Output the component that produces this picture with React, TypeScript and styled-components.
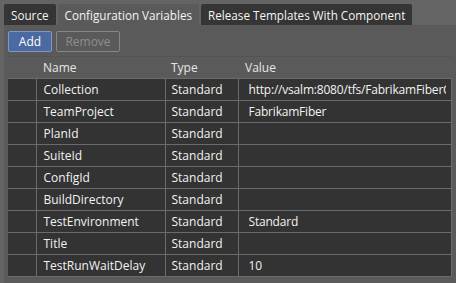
import React from 'react'
import styled, { createGlobalStyle } from 'styled-components'

const GlobalStyle = createGlobalStyle`
  html, body {
    margin: 0;
    padding: 0;
    background: #646464;
  }
  body {
    font-family: "Open Sans", "Noto Sans", sans-serif;
    font-size: 12px;
    color: #f2f2f2;
  }
`

const Window = styled.div`
  width: 456px;
  height: 283px;
  display: flex;
  flex-direction: column;
  padding-top: 4px;
  padding-left: 4px;
  box-sizing: border-box;
  overflow: hidden;
`

const TabStrip = styled.div`
  display: flex;
  gap: 2px;
  height: 21px;
`

const Tab = styled.div<{ $active?: boolean }>`
  display: flex;
  align-items: center;
  padding: 0 7px;
  height: 21px;
  box-sizing: border-box;
  border-radius: 2px 2px 0 0;
  background: ${p => (p.$active ? '#5a5a5a' : '#353535')};
  color: #f4f4f4;
  font-size: 11.7px;
  white-space: nowrap;
`

const Panel = styled.div`
  flex: 1;
  background: #5a5a5a;
  padding: 6px 4px 0 4px;
  display: flex;
  flex-direction: column;
`

const Toolbar = styled.div`
  display: flex;
  gap: 4px;
  height: 21px;
`

const Button = styled.button<{ $primary?: boolean; $width: number }>`
  font: inherit;
  width: ${p => p.$width}px;
  height: 21px;
  box-sizing: border-box;
  border-radius: 2px;
  padding: 0;
  display: flex;
  align-items: center;
  justify-content: center;
  border: 1px solid ${p => (p.$primary ? '#8098c4' : '#868686')};
  background: ${p => (p.$primary ? '#4b6aa1' : 'transparent')};
  color: ${p => (p.$primary ? '#ffffff' : '#8e8e8e')};
`

const Grid = styled.table`
  margin-top: 4px;
  width: 444px;
  border-collapse: collapse;
  table-layout: fixed;
  border-top: 1px solid #545454;
`

const HeadCell = styled.th<{ $pad?: number }>`
  height: 21px;
  padding: 0 0 0 ${p => p.$pad ?? 7}px;
  text-align: left;
  font-weight: normal;
  color: #e6e6e6;
  background: #5a5a5a;
  border-bottom: 1px solid #6b6b6b;
`

const Cell = styled.td<{ $pad?: number }>`
  height: 21px;
  padding: 0 0 0 ${p => p.$pad ?? 7}px;
  background: #333333;
  border: 1px solid #6b6b6b;
  border-top: none;
  white-space: nowrap;
  overflow: hidden;
  color: #f2f2f2;
  &:first-child {
    border-left: none;
  }
`

const ValueText = styled.div`
  margin-right: 5px;
  overflow: hidden;
  white-space: nowrap;
  letter-spacing: -0.2px;
`

const rows = [
  ['Collection', 'Standard', 'http://vsalm:8080/tfs/FabrikamFiberCollection'],
  ['TeamProject', 'Standard', 'FabrikamFiber'],
  ['PlanId', 'Standard', ''],
  ['SuiteId', 'Standard', ''],
  ['ConfigId', 'Standard', ''],
  ['BuildDirectory', 'Standard', ''],
  ['TestEnvironment', 'Standard', 'Standard'],
  ['Title', 'Standard', ''],
  ['TestRunWaitDelay', 'Standard', '10'],
]

export default function App() {
  return (
    <Window>
      <GlobalStyle />
      <TabStrip>
        <Tab>Source</Tab>
        <Tab $active>Configuration Variables</Tab>
        <Tab>Release Templates With Component</Tab>
      </TabStrip>
      <Panel>
        <Toolbar>
          <Button $primary $width={44}>Add</Button>
          <Button $width={64}>Remove</Button>
        </Toolbar>
        <Grid>
          <colgroup>
            <col style={{ width: 28 }} />
            <col style={{ width: 129 }} />
            <col style={{ width: 73 }} />
            <col />
          </colgroup>
          <thead>
            <tr>
              <HeadCell />
              <HeadCell>Name</HeadCell>
              <HeadCell $pad={6}>Type</HeadCell>
              <HeadCell $pad={7}>Value</HeadCell>
            </tr>
          </thead>
          <tbody>
            {rows.map(([name, type, value]) => (
              <tr key={name}>
                <Cell />
                <Cell>{name}</Cell>
                <Cell $pad={6}>{type}</Cell>
                <Cell $pad={10}>
                  <ValueText>{value}</ValueText>
                </Cell>
              </tr>
            ))}
          </tbody>
        </Grid>
      </Panel>
    </Window>
  )
}
